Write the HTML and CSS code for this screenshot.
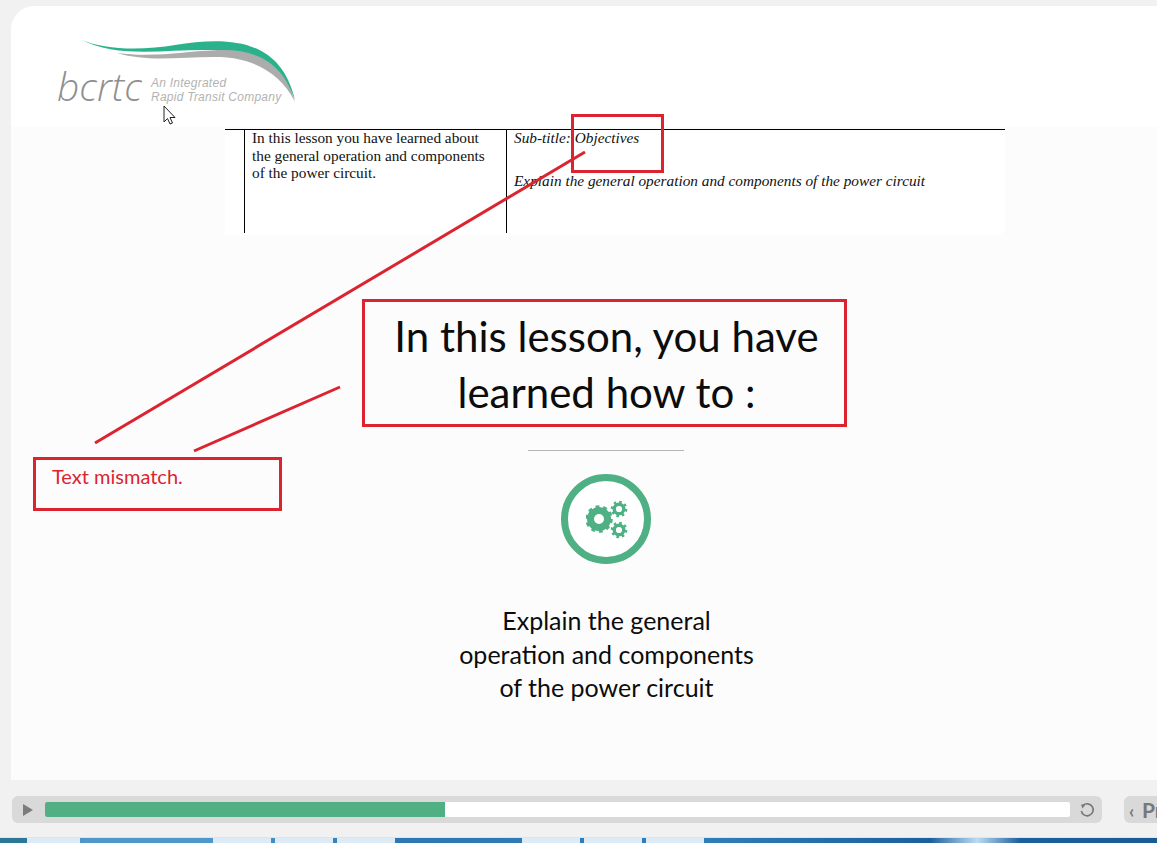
FILE: index.html
```html
<!DOCTYPE html>
<html lang="en">
<head>
    <meta charset="UTF-8">
    <meta name="viewport" content="width=device-width, initial-scale=1.0">
    <title>Lesson Summary</title>
    <link rel="stylesheet" href="styles.css">
</head>
<body>
<div class="slide">
    <header class="slide-head">
        <svg class="logo" width="250" height="75" viewBox="0 0 250 75">
            <path d="M25 3 C50 15 90 14 120 9 C170 1 225 0 240 64 C225 25 190 14 150 14 C105 14 60 22 25 3Z" fill="#2bb28c"/>
            <path d="M62 17 C100 22 130 15 165 14 C205 13 230 30 240 66 C225 35 195 22 165 21 C130 20 95 27 62 17Z" fill="#acacac"/>
        </svg>
        <span class="logo-name">bcrtc</span>
        <span class="logo-tag">An Integrated<br>Rapid Transit Company</span>
    </header>

    <div class="doc">
        <div class="doc-cell doc-left">
            <p>In this lesson you have learned about<br>the general operation and components<br>of the power circuit.</p>
        </div>
        <div class="doc-cell doc-right">
            <p>Sub-title: Objectives</p>
            <p class="doc-gap">Explain the general operation and components of the power circuit</p>
        </div>
    </div>

    <main class="lesson">
        <h1 class="lesson-title">In this lesson, you have<br>learned how to :</h1>
        <div class="rule"></div>
        <div class="gear-ring">
            <svg class="gears" width="46" height="44" viewBox="0 0 46 44" fill="none" stroke="#4fb083">
                <circle cx="13" cy="22" r="8.500" stroke-width="7"/>
                <circle cx="13" cy="22" r="12" stroke-width="3.500" stroke-dasharray="3.800 3.740"/>
                <circle cx="33" cy="12" r="4.800" stroke-width="3.400"/>
                <circle cx="33" cy="12" r="7" stroke-width="2.600" stroke-dasharray="2.500 2.998"/>
                <circle cx="33" cy="33" r="4.800" stroke-width="3.400"/>
                <circle cx="33" cy="33" r="7" stroke-width="2.600" stroke-dasharray="2.500 2.998"/>
            </svg>
        </div>
        <p class="lesson-text">Explain the general<br>operation and components<br>of the power circuit</p>
    </main>

    <!-- review markup drawn on top of the slide -->
    <svg class="marks" width="1157" height="843" viewBox="0 0 1157 843">
        <g fill="none" stroke="#dc2430" stroke-width="3">
            <rect x="572.500" y="115.500" width="90" height="56"/>
            <rect x="363.500" y="300.500" width="482" height="125"/>
            <rect x="34.500" y="458.500" width="246" height="51"/>
            <path d="M585 152 L95 443"/>
            <path d="M340 387 L194 451"/>
        </g>
        <path d="M164 106v16l3.500-3.500 2.500 5.500 2.500-1-2.500-5.500h5z" fill="#fff" stroke="#222" stroke-width="1"/>
    </svg>
    <span class="mark-note">Text mismatch.</span>
</div>

<div class="player">
    <div class="player-bar">
        <svg class="play" width="11" height="12" viewBox="0 0 11 12"><path d="M0 0 L10 6 L0 12Z" fill="#7c7c7c"/></svg>
        <div class="track"><div class="track-fill"></div></div>
        <svg class="replay" width="16" height="16" viewBox="0 0 16 16" fill="none" stroke="#777" stroke-width="1.600">
            <path d="M4 3.500 A6 6 0 1 1 2.300 9"/>
            <path d="M2 2.500 L6.500 2.500 L3.500 6.500Z" fill="#777" stroke="none"/>
        </svg>
    </div>
    <div class="prev-btn"><span class="prev-arrow">‹</span>Prev</div>
</div>

<div class="taskbar">
    <span class="task task-first"></span>
    <span class="task task-group"></span>
    <span class="task"></span>
    <span class="task"></span>
    <span class="task task-group2"></span>
    <span class="task"></span>
    <span class="task"></span>
</div>
</body>
</html>
```

FILE: styles.css
```css
* {
  box-sizing: border-box;
}

html, body {
  height: 843px;
  overflow: hidden;
}

body {
  margin: 0;
  background-color: #f1f1f1;
  font-family: Lato, "Open Sans", sans-serif;
  display: flex;
  flex-direction: column;
  padding-top: 6px;
}

.slide {
  margin-left: 11px;
  width: 1191px;
  flex: none;
  height: 774px;
  background-color: #fcfcfd;
  border-top-left-radius: 24px;
  display: flex;
  flex-direction: column;
  align-items: center;
}

.slide-head {
  align-self: stretch;
  height: 121px;
  background-color: #fff;
  border-top-left-radius: 24px;
  position: relative;
}

.logo {
  position: absolute;
  left: 44px;
  top: 30px;
}

.logo-name {
  position: absolute;
  left: 46px;
  top: 55px;
  font-family: "Open Sans", sans-serif;
  font-style: italic;
  font-weight: 300;
  font-size: 39px;
  line-height: 50px;
  color: #8f8f8f;
}

.logo-tag {
  position: absolute;
  left: 140px;
  top: 70px;
  font-family: "Liberation Sans", sans-serif;
  font-style: italic;
  font-size: 12px;
  letter-spacing: 0.250px;
  line-height: 14px;
  color: #b3b3b3;
}

.doc {
  width: 780px;
  height: 106px;
  margin-left: 17px;
  margin-top: 2px;
  padding-left: 19px;
  background-color: #fff;
  border-top: 1px solid #000;
  border-bottom-right-radius: 8px;
  display: flex;
  align-items: flex-start;
  font-family: "Liberation Serif", serif;
  font-size: 15.300px;
  line-height: 17.500px;
  color: #111;
}

.doc-cell {
  height: 103px;
  border-left: 1px solid #000;
  padding: 0 7px;
}

.doc-cell p {
  margin: -1px 0 0;
}

.doc-left {
  width: 262px;
  white-space: nowrap;
}

.doc-right {
  flex: 1;
  font-style: italic;
}

.doc-cell .doc-gap {
  margin-top: 25px;
}

.lesson {
  text-align: center;
  color: #0c0c0c;
  display: flex;
  flex-direction: column;
  align-items: center;
}

.lesson-title {
  margin: 73px 0 0;
  font-weight: 400;
  font-size: 42px;
  line-height: 56px;
}

.rule {
  width: 156px;
  height: 1px;
  margin-top: 30px;
  background-color: #b5b5b5;
}

.gear-ring {
  width: 90px;
  height: 90px;
  margin-top: 23px;
  border: 7px solid #4fb083;
  border-radius: 50%;
  background-color: #fff;
  display: flex;
  align-items: center;
  justify-content: center;
}

.gears {
  margin-left: 5px;
}

.lesson-text {
  margin: 40px 0 0;
  font-size: 25px;
  line-height: 33.500px;
}

.marks {
  position: absolute;
  left: 0;
  top: 0;
}

.mark-note {
  position: absolute;
  left: 52px;
  top: 465px;
  font-size: 20px;
  line-height: 23px;
  color: #dc2430;
}

.player {
  height: 57px;
  flex: none;
  margin-left: 12px;
  padding-top: 16px;
  display: flex;
  gap: 22px;
}

.player-bar {
  flex: 0 0 1090px;
  height: 27px;
  padding: 0 7px 0 11px;
  background-color: #d9d9d9;
  border-radius: 6px;
  display: flex;
  align-items: center;
}

.track {
  flex: none;
  width: 1025px;
  height: 15px;
  margin-left: 11px;
  background-color: #fff;
  border-radius: 2px;
  overflow: hidden;
}

.track-fill {
  width: 400px;
  height: 100%;
  background-color: #51b083;
}

.replay {
  flex: none;
  margin-left: 9px;
}

.prev-btn {
  flex: none;
  height: 27px;
  padding: 0 10px 0 5px;
  background-color: #d9d9d9;
  border-radius: 6px;
  font-size: 21px;
  font-weight: 700;
  line-height: 27px;
  color: #777;
  white-space: nowrap;
}

.prev-arrow {
  display: inline-block;
  width: 13px;
  font-size: 18px;
}

.taskbar {
  height: 6px;
  flex: none;
  background: linear-gradient(90deg, #2a7896 0, #2a7896 27px, #4f98cb 85px, #4f98cb 213px, #2c77b4 395px, #2f7fbc 700px, #1b5f9e 930px, #bcdcf2 977px, #1b5f9e 1020px, #1a5a96 1157px);
  border-top: 1px solid #d7e6f2;
  display: flex;
  gap: 4px;
  padding-left: 27px;
}

.task {
  width: 58px;
  height: 100%;
  background-color: #dcebf5;
}

.task-first {
  width: 53px;
}

.task-group {
  margin-left: 129px;
}

.task-group2 {
  margin-left: 123px;
}
```
